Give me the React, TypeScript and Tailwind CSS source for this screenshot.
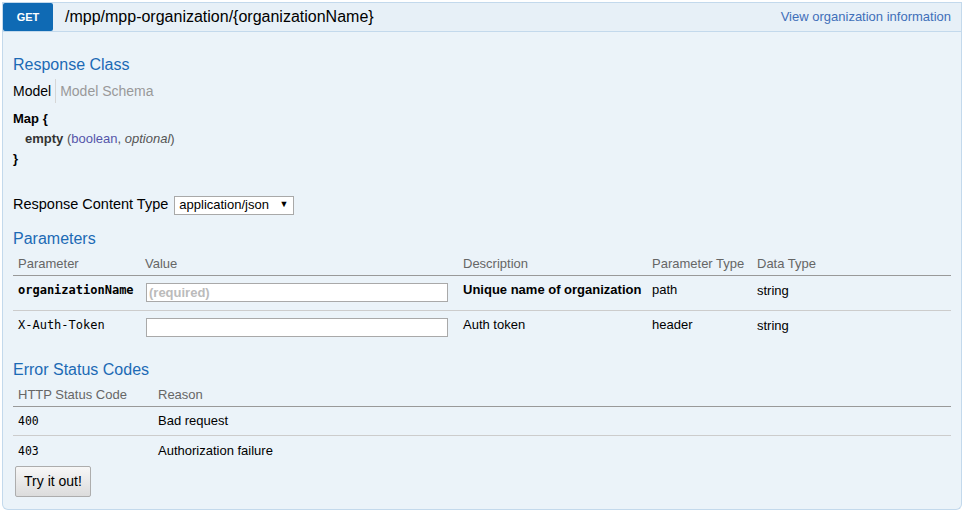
import React from "react";

const sans = "font-['Liberation_Sans',Arial,sans-serif]";
const mono = "font-['DejaVu_Sans_Mono',monospace]";

const params = [
  { name: "organizationName", required: true, desc: "Unique name of organization", type: "path", data: "string" },
  { name: "X-Auth-Token", required: false, desc: "Auth token", type: "header", data: "string" },
];

const errors = [
  { code: "400", reason: "Bad request" },
  { code: "403", reason: "Authorization failure" },
];

export default function App() {
  return (
    <div className={`${sans} w-[964px] h-[512px] bg-white pt-[2px] pl-[2px] text-black`}>
      <div className="w-[960px]">
        {/* heading bar */}
        <div className="flex h-[30px] items-stretch border border-[#c3d9ec] bg-[#e7f0f7]">
          <span className="flex w-[50px] items-center justify-center rounded-[2px] bg-[#0f6ab4] text-[11px] font-bold text-white">
            GET
          </span>
          <span className="ml-[12px] flex items-center text-[16px] leading-none text-black">
            /mpp/mpp-organization/{"{organizationName}"}
          </span>
          <span className="ml-auto mr-[10px] flex items-center text-[13px] text-[#3f6fb9]">
            View organization information
          </span>
        </div>

        {/* content */}
        <div className="flow-root h-[478px] rounded-b-[6px] border-x border-b border-[#c3d9ec] bg-[#ebf3f9] px-[10px] pt-[23px]">
          <h4 className="text-[16px] leading-[20px] text-[#1c6ab5]">Response Class</h4>
          <div className="mt-[7px] flex h-[18px] items-center text-[14px] leading-[18px]">
            <span className="pr-[4px] text-black">Model</span>
            <span className="h-[24px] border-l border-[#d6d6d6]" />
            <span className="pl-[4px] text-[#999]">Model Schema</span>
          </div>
          <div className="mt-[9px] text-[13px] leading-[20px]">
            <div className="font-bold">Map {"{"}</div>
            <div className="pl-[12px]">
              <span className="font-bold text-[#333]">empty</span>{" "}
              <span className="text-[#555]">
                (<span className="text-[#55a]">boolean</span>, <span className="italic">optional</span>)
              </span>
            </div>
            <div className="font-bold">{"}"}</div>
          </div>

          <div className="mt-[26px] flex h-[20px] items-center text-[14.5px]">
            <span>Response Content Type</span>
            <div className="ml-[6px] flex h-[19px] w-[120px] items-center justify-between border border-[#a9a9a9] bg-white pl-[4px] pr-[5px] text-[13px]">
              <span>application/json</span>
              <span className="text-[9px]">▼</span>
            </div>
          </div>

          <h4 className="mt-[14px] text-[16px] leading-[20px] text-[#1c6ab5]">Parameters</h4>
          <div className="w-[938px] text-[13px]">
            <div className="grid h-[27px] grid-cols-[127px_318px_189px_105px_1fr] items-end border-b border-[#999] pb-[2px] text-[#666]">
              <span className="pl-[5px]">Parameter</span>
              <span className="pl-[5px]">Value</span>
              <span className="pl-[5px]">Description</span>
              <span className="pl-[5px]">Parameter Type</span>
              <span className="pl-[5px]">Data Type</span>
            </div>
            {params.map((p, i) => (
              <div
                key={p.name}
                className={`grid h-[35px] grid-cols-[127px_318px_189px_105px_1fr] items-start pt-[6px] ${
                  i < params.length - 1 ? "border-b border-[#ccc]" : ""
                }`}
              >
                <span className={`${mono} pl-[5px] text-[12px] leading-[16px] ${p.required ? "font-bold" : ""}`}>{p.name}</span>
                <div className="pl-[6px] pt-[1px]">
                  <div className="flex h-[19px] w-[302px] items-center border border-[#a9a9a9] bg-white pl-[2px]">
                    {p.required && <span className="text-[13px] font-bold text-[#bbb]">(required)</span>}
                  </div>
                </div>
                <span className={`pl-[5px] leading-[16px] ${p.required ? "font-bold" : ""}`}>{p.desc}</span>
                <span className="pl-[5px] leading-[16px]">{p.type}</span>
                <span className="pl-[5px] pt-[1px] leading-[16px]">{p.data}</span>
              </div>
            ))}
          </div>

          <h4 className="mt-[14px] text-[16px] leading-[20px] text-[#1c6ab5]">Error Status Codes</h4>
          <div className="mt-[3px] w-[938px] text-[13px]">
            <div className="grid h-[24px] grid-cols-[140px_1fr] items-end border-b border-[#999] pb-[2px] text-[#666]">
              <span className="pl-[5px]">HTTP Status Code</span>
              <span className="pl-[5px]">Reason</span>
            </div>
            {errors.map((e, i) => (
              <div
                key={e.code}
                className={`grid h-[29px] grid-cols-[140px_1fr] items-center ${
                  i < errors.length - 1 ? "border-b border-[#ccc]" : ""
                }`}
              >
                <span className={`${mono} pl-[5px] pt-[2px] text-[11.5px]`}>{e.code}</span>
                <span className="pl-[5px]">{e.reason}</span>
              </div>
            ))}
          </div>

          <button className="ml-[2px] mt-[1px] h-[31px] w-[76px] rounded-[2px] border border-[#adadad] bg-gradient-to-b from-[#f7f7f7] to-[#dcdcdc] text-[14px] text-black">
            Try it out!
          </button>
        </div>
      </div>
    </div>
  );
}
